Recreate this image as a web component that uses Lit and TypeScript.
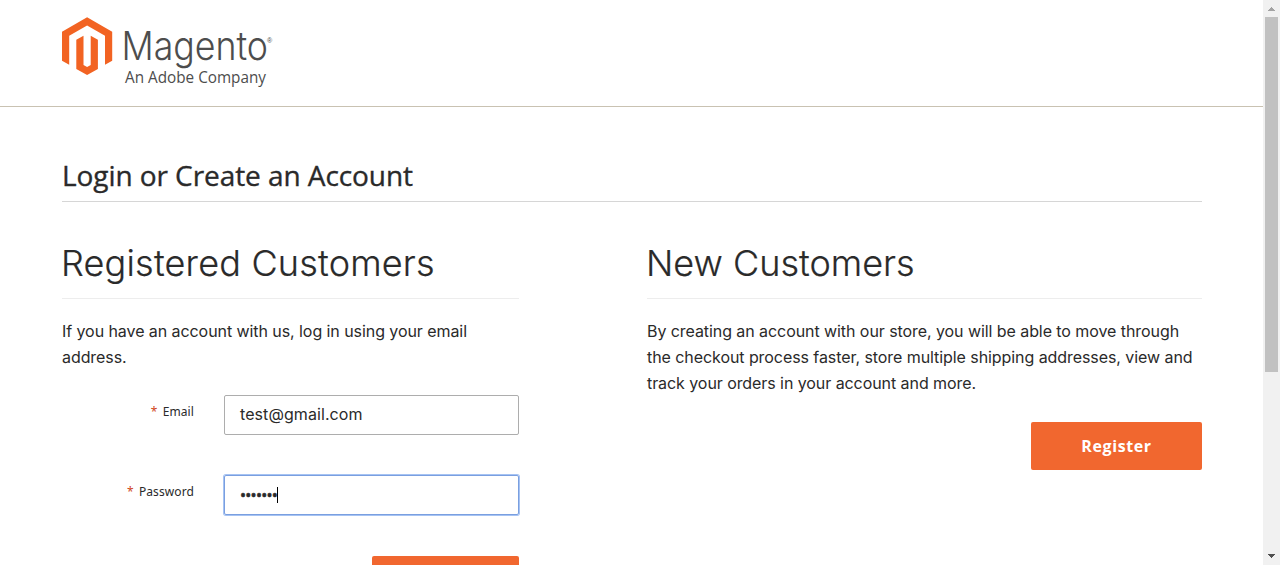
import { LitElement, html, css } from "lit";
import { customElement } from "lit/decorators.js";

@customElement("magento-logo")
class MagentoLogo extends LitElement {
  static styles = css`
    :host { display: block; }
    svg { display: block; overflow: visible; }
    .name { font: 300 39.5px Inter, sans-serif; fill: #4d4d4d; }
    .tagline { font: 400 15.5px "Open Sans", sans-serif; fill: #4d4d4d; }
    .mark { font: 7px "Liberation Sans", sans-serif; fill: #4d4d4d; }
  `;
  render() {
    return html`
      <svg width="212" height="72" viewBox="0 0 212 72" role="img" aria-label="Magento">
        <g fill="#f26322">
          <path d="M25.1 .2 0 14.7V43.7L7.2 47.8V18.8L25.1 8.5 43 18.8V47.8L50.2 43.7V14.7Z" />
          <path d="M28.7 48 25.1 50 21.5 48V18.8L14.3 22.8V51.9L25.1 58 35.9 51.9V22.8L28.7 18.8Z" />
        </g>
        <text class="name" x="59.5" y="43.3" textLength="146.5" lengthAdjust="spacingAndGlyphs">Magento</text>
        <text class="mark" x="205" y="26">®</text>
        <text class="tagline" x="63" y="66.3" textLength="141" lengthAdjust="spacingAndGlyphs">An Adobe Company</text>
      </svg>`;
  }
}

@customElement("page-scrollbar")
class PageScrollbar extends LitElement {
  static styles = css`
    :host { display: flex; flex-direction: column; width: 17px; height: 100%; background: #f1f1f1; }
    svg { display: block; flex: none; }
    .thumb { height: 355px; margin: 0 2px; background: #c1c1c1; }
    .space { flex: 1; }
  `;
  render() {
    return html`
      <svg width="17" height="17" shape-rendering="crispEdges"><path d="M5 11h7v-1h-1v-1h-1v-1h-1v-1h-1v1h-1v1h-1v1h-1z" fill="#a3a3a3" /></svg>
      <div class="thumb"></div>
      <div class="space"></div>
      <svg width="17" height="17" shape-rendering="crispEdges"><path d="M5 6h7v1h-1v1h-1v1h-1v1h-1v-1h-1v-1h-1v-1h-1z" fill="#505050" /></svg>`;
  }
}

@customElement("app-root")
class AppRoot extends LitElement {
  static styles = css`
    :host { display: flex; height: 565px; overflow: hidden; background: #fff; color: #2a2a2a; font: 16px/26px Inter, sans-serif; }
    * { box-sizing: border-box; }
    .page { flex: 1; min-width: 0; height: 565px; overflow: hidden; }
    header { height: 107px; padding: 17px 62px 0; border-bottom: 1px solid #c9c2b2; }
    main { padding: 47px 61px 0 62px; }
    h1, h2, p { margin: 0; }
    h1 { height: 48px; border-bottom: 1px solid #d6d6d6; font: 400 28px/42px "Open Sans", sans-serif; letter-spacing: -.07px; -webkit-text-stroke: .35px #2a2a2a; }
    .columns { display: flex; justify-content: space-between; padding-top: 36px; }
    .registered { width: 457px; }
    .new { width: 555px; }
    h2 { height: 61px; margin-bottom: 19px; border-bottom: 1px solid #ededed; font: 300 36px/50px Inter, sans-serif; letter-spacing: .2px; text-indent: -1px; -webkit-text-stroke: .2px #2a2a2a; white-space: nowrap; }
    .new h2 { letter-spacing: 0; }
    p { letter-spacing: -.07px; }
    form { padding-top: 25px; }
    .field { display: grid; grid-template-columns: 132px 295px; column-gap: 30px; height: 80px; }
    label { padding-top: 7px; text-align: right; font: 12px/20px "Noto Sans", sans-serif; letter-spacing: .1px; }
    .required { margin-right: 2px; color: #d0451b; }
    .input { display: flex; align-items: center; height: 40px; padding: 0 15px 2px; border: 1px solid #adadad; border-radius: 2px; letter-spacing: .08px; }
    .focused { border-color: #7a9fe0; box-shadow: 0 0 0 1px #a6c3f3; padding-bottom: 0; }
    .dots { font: 16px/16px "Open Sans", sans-serif; letter-spacing: -.72px; -webkit-text-stroke: .6px #2a2a2a; }
    .caret { width: 1px; height: 16px; background: #000; }
    .button { display: flex; align-items: center; justify-content: center; height: 48px; border-radius: 2px; background: #f1672f; color: #fff; font: 700 16px/24px "Open Sans", sans-serif; letter-spacing: .6px; }
    .login { width: 147px; margin: 1px 0 0 auto; }
    .register { width: 171px; margin: 26px 0 0 auto; }
  `;
  render() {
    return html`
      <div class="page">
        <header><magento-logo></magento-logo></header>
        <main>
          <h1>Login or Create an Account</h1>
          <div class="columns">
            <section class="registered">
              <h2>Registered Customers</h2>
              <p>If you have an account with us, log in using your email<br />address.</p>
              <form>
                <div class="field">
                  <label><span class="required">*</span> Email</label>
                  <div class="input">test@gmail.com</div>
                </div>
                <div class="field">
                  <label><span class="required">*</span> Password</label>
                  <div class="input focused"><span class="dots">•••••••</span><span class="caret"></span></div>
                </div>
                <div class="button login"></div>
              </form>
            </section>
            <section class="new">
              <h2>New Customers</h2>
              <p>By creating an account with our store, you will be able to move through<br />the checkout process faster, store multiple shipping addresses, view and<br />track your orders in your account and more.</p>
              <div class="button register">Register</div>
            </section>
          </div>
        </main>
      </div>
      <page-scrollbar></page-scrollbar>`;
  }
}
